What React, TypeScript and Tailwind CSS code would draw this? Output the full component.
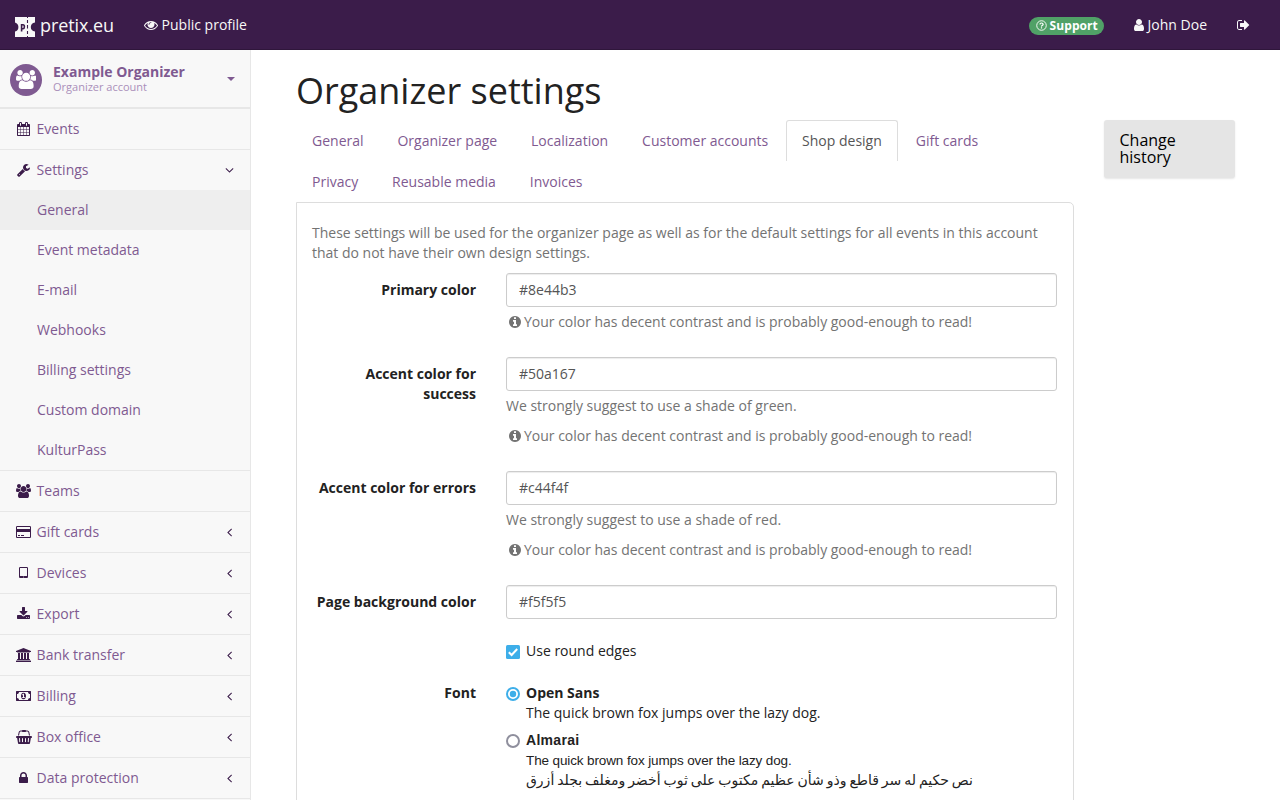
import React from "react";

type Glyph = { x?: number; w: number; d: string };

const G: Record<string, Glyph> = {
  eye: { w: 1792, d: "M1664 960q-152-236-381-353 61 104 61 225 0 185-131.5 316.5t-316.5 131.5-316.5-131.5-131.5-316.5q0-121 61-225-229 117-381 353 133 205 333.5 326.5t434.5 121.5 434.5-121.5 333.5-326.5zm-720-384q0-20-14-34t-34-14q-125 0-214.5 89.5t-89.5 214.5q0 20 14 34t34 14 34-14 14-34q0-86 61-147t147-61q20 0 34-14t14-34zm848 384q0 34-20 69-140 230-376.5 368.5t-499.5 138.5-499.5-139-376.5-368q-20-35-20-69t20-69q140-229 376.5-368t499.5-139 499.5 139 376.5 368q20 35 20 69z" },
  users: { x: 64, w: 1920, d: "M657 896q-162 5-265 128h-134q-82 0-138-40.5t-56-118.5q0-353 124-353 6 0 43.5 21t97.5 42.5 119 21.5q67 0 133-23-5 37-5 66 0 139 81 256zm1071 637q0 120-73 189.5t-194 69.5h-874q-121 0-194-69.5t-73-189.5q0-53 3.5-103.5t14-109 26.5-108.5 43-97.5 62-81 85.5-53.5 111.5-20q10 0 43 21.5t73 48 107 48 135 21.5 135-21.5 107-48 73-48 43-21.5q61 0 111.5 20t85.5 53.5 62 81 43 97.5 26.5 108.5 14 109 3.5 103.5zm-1024-1277q0 106-75 181t-181 75-181-75-75-181 75-181 181-75 181 75 75 181zm704 384q0 159-112.5 271.5t-271.5 112.5-271.5-112.5-112.5-271.5 112.5-271.5 271.5-112.5 271.5 112.5 112.5 271.5zm576 225q0 78-56 118.5t-138 40.5h-134q-103-123-265-128 81-117 81-256 0-29-5-66 66 23 133 23 59 0 119-21.5t97.5-42.5 43.5-21q124 0 124 353zm-128-609q0 106-75 181t-181 75-181-75-75-181 75-181 181-75 181 75 75 181z" },
  calendar: { x: 64, w: 1664, d: "M192 1664h288v-288h-288v288zm352 0h320v-288h-320v288zm-352-352h288v-320h-288v320zm352 0h320v-320h-320v320zm-352-384h288v-288h-288v288zm736 736h320v-288h-320v288zm-384-736h320v-288h-320v288zm768 736h288v-288h-288v288zm-384-352h320v-320h-320v320zm-352-864v-288q0-13-9.5-22.5t-22.5-9.5h-64q-13 0-22.5 9.5t-9.5 22.5v288q0 13 9.5 22.5t22.5 9.5h64q13 0 22.5-9.5t9.5-22.5zm736 864h288v-320h-288v320zm-384-384h320v-288h-320v288zm384 0h288v-288h-288v288zm32-480v-288q0-13-9.5-22.5t-22.5-9.5h-64q-13 0-22.5 9.5t-9.5 22.5v288q0 13 9.5 22.5t22.5 9.5h64q13 0 22.5-9.5t9.5-22.5zm384-64v1280q0 52-38 90t-90 38h-1408q-52 0-90-38t-38-90v-1280q0-52 38-90t90-38h128v-96q0-66 47-113t113-47h64q66 0 113 47t47 113v96h384v-96q0-66 47-113t113-47h64q66 0 113 47t47 113v96h128q52 0 90 38t38 90z" },
  wrench: { x: 64, w: 1664, d: "M448 1472q0-26-19-45t-45-19-45 19-19 45 19 45 45 19 45-19 19-45zm644-420l-682 682q-37 37-90 37-52 0-91-37l-106-108q-38-36-38-90 0-53 38-91l681-681q39 98 114.5 173.5t173.5 114.5zm634-435q0 39-23 106-47 134-164.5 217.5t-258.5 83.5q-185 0-316.5-131.5t-131.5-316.5 131.5-316.5 316.5-131.5q58 0 121.5 16.5t107.5 46.5q16 11 16 28t-16 28l-293 169v224l193 107q5-3 79-48.5t135.5-81 70.5-35.5q15 0 23.5 10t8.5 25z" },
  down: { x: 320, w: 1152, d: "M1395 736q0 13-10 23l-466 466q-10 10-23 10t-23-10l-466-466q-10-10-10-23t10-23l50-50q10-10 23-10t23 10l393 393 393-393q10-10 23-10t23 10l50 50q10 10 10 23z" },
  left: { x: 576, w: 640, d: "M1203 544q0 13-10 23l-393 393 393 393q10 10 10 23t-10 23l-50 50q-10 10-23 10t-23-10l-466-466q-10-10-10-23t10-23l466-466q10-10 23-10t23 10l50 50q10 10 10 23z" },
  card: { w: 1920, d: "M1760 128q66 0 113 47t47 113v1216q0 66-47 113t-113 47h-1600q-66 0-113-47t-47-113v-1216q0-66 47-113t113-47h1600zm-1600 128q-13 0-22.5 9.5t-9.5 22.5v224h1664v-224q0-13-9.5-22.5t-22.5-9.5h-1600zm1600 1280q13 0 22.5-9.5t9.5-22.5v-608h-1664v608q0 13 9.5 22.5t22.5 9.5h1600zm-1504-128v-128h256v128h-256zm384 0v-128h384v128h-384z" },
  tablet: { x: 320, w: 1152, d: "M960 1408q0-26-19-45t-45-19-45 19-19 45 19 45 45 19 45-19 19-45zm384-160v-960q0-13-9.5-22.5t-22.5-9.5h-832q-13 0-22.5 9.5t-9.5 22.5v960q0 13 9.5 22.5t22.5 9.5h832q13 0 22.5-9.5t9.5-22.5zm128-960v1088q0 66-47 113t-113 47h-832q-66 0-113-47t-47-113v-1088q0-66 47-113t113-47h832q66 0 113 47t47 113z" },
  download: { x: 64, w: 1664, d: "M1344 1344q0-26-19-45t-45-19-45 19-19 45 19 45 45 19 45-19 19-45zm256 0q0-26-19-45t-45-19-45 19-19 45 19 45 45 19 45-19 19-45zm128-224v320q0 40-28 68t-68 28h-1472q-40 0-68-28t-28-68v-320q0-40 28-68t68-28h465l135 136q58 56 136 56t136-56l136-136h464q40 0 68 28t28 68zm-325-569q17 41-14 70l-448 448q-18 19-45 19t-45-19l-448-448q-31-29-14-70 17-39 59-39h256v-448q0-26 19-45t45-19h256q26 0 45 19t19 45v448h256q42 0 59 39z" },
  bank: { w: 1920, d: "M960 0l960 384v128h-128q0 26-20.5 45t-48.5 19h-1526q-28 0-48.5-19t-20.5-45h-128v-128zm-704 640h256v768h128v-768h256v768h128v-768h256v768h128v-768h256v768h59q28 0 48.5 19t20.5 45v64h-1664v-64q0-26 20.5-45t48.5-19h59v-768zm1595 960q28 0 48.5 19t20.5 45v128h-1920v-128q0-26 20.5-45t48.5-19h1782z" },
  money: { w: 1920, d: "M768 1152h384v-96h-128v-448h-114l-148 137 77 80q42-37 55-57h2v288h-128v96zm512-256q0 70-21 142t-59.5 134-101.5 101-138 39-138-39-101.5-101-59.5-134-21-142 21-142 59.5-134 101.5-101 138-39 138 39 101.5 101 59.5 134 21 142zm512 256v-512q-106 0-181-75t-75-181h-1152q0 106-75 181t-181 75v512q106 0 181 75t75 181h1152q0-106 75-181t181-75zm128-832v1152q0 26-19 45t-45 19h-1792q-26 0-45-19t-19-45v-1152q0-26 19-45t45-19h1792q26 0 45 19t19 45z" },
  basket: { w: 2048, d: "M1920 768q53 0 90.5 37.5t37.5 90.5-37.5 90.5-90.5 37.5h-15l-115 662q-8 46-44 76t-82 30h-1280q-46 0-82-30t-44-76l-115-662h-15q-53 0-90.5-37.5t-37.5-90.5 37.5-90.5 90.5-37.5h1792zm-1435 800q26-2 43.5-22.5t15.5-46.5l-32-416q-2-26-22.5-43.5t-46.5-15.5-43.5 22.5-15.5 46.5l32 416q2 25 20.5 42t43.5 17h5zm411-64v-416q0-26-19-45t-45-19-45 19-19 45v416q0 26 19 45t45 19 45-19 19-45zm384 0v-416q0-26-19-45t-45-19-45 19-19 45v416q0 26 19 45t45 19 45-19 19-45zm352 5l32-416q2-26-15.5-46.5t-43.5-22.5-46.5 15.5-22.5 43.5l-32 416q-2 26 15.5 46.5t43.5 22.5h5q25 0 43.5-17t20.5-42zm-1156-1217l-93 412h-132l101-441q19-88 89-143.5t160-55.5h167q0-26 19-45t45-19h384q26 0 45 19t19 45h167q90 0 160 55.5t89 143.5l101 441h-132l-93-412q-11-44-45.5-72t-79.5-28h-167q0 26-19 45t-45 19h-384q-26 0-45-19t-19-45h-167q-45 0-79.5 28t-45.5 72z" },
  lock: { x: 320, w: 1152, d: "M640 768h512v-192q0-106-75-181t-181-75-181 75-75 181v192zm832 96v576q0 40-28 68t-68 28h-960q-40 0-68-28t-28-68v-576q0-40 28-68t68-28h32v-192q0-184 132-316t316-132 316 132 132 316v192h32q40 0 68 28t28 68z" },
  info: { x: 128, w: 1536, d: "M1152 1376v-160q0-14-9-23t-23-9h-96v-512q0-14-9-23t-23-9h-320q-14 0-23 9t-9 23v160q0 14 9 23t23 9h96v320h-96q-14 0-23 9t-9 23v160q0 14 9 23t23 9h448q14 0 23-9t9-23zm-128-896v-160q0-14-9-23t-23-9h-192q-14 0-23 9t-9 23v160q0 14 9 23t23 9h192q14 0 23-9t9-23zm640 416q0 209-103 385.5t-279.5 279.5-385.5 103-385.5-103-279.5-279.5-103-385.5 103-385.5 279.5-279.5 385.5-103 385.5 103 279.5 279.5 103 385.5z" },
  user: { x: 256, w: 1280, d: "M1536 1399q0 109-62.5 187t-150.5 78h-854q-88 0-150.5-78t-62.5-187q0-85 8.5-160.5t31.5-152 58.5-131 94-89 134.5-34.5q131 128 313 128t313-128q76 0 134.5 34.5t94 89 58.5 131 31.5 152 8.5 160.5zm-256-887q0 159-112.5 271.5t-271.5 112.5-271.5-112.5-112.5-271.5 112.5-271.5 271.5-112.5 271.5 112.5 112.5 271.5z" },
  signout: { x: 64, w: 1600, d: "M704 1440q0 4 1 20t.5 26.5-3 23.5-10 19.5-20.5 6.5h-320q-119 0-203.5-84.5t-84.5-203.5v-704q0-119 84.5-203.5t203.5-84.5h320q13 0 22.5 9.5t9.5 22.5q0 4 1 20t.5 26.5-3 23.5-10 19.5-20.5 6.5h-320q-66 0-113 47t-47 113v704q0 66 47 113t113 47h312l11.5 1 11.5 3 8 5.5 7 9 2 13.5zm928-544q0 26-19 45l-544 544q-19 19-45 19t-45-19-19-45v-288h-448q-26 0-45-19t-19-45v-384q0-26 19-45t45-19h448v-288q0-26 19-45t45-19 45 19l544 544q19 19 19 45z" },
};

function Icon({ name, size = 14, className = "" }: { name: string; size?: number; className?: string }) {
  const g = G[name];
  return (
    <svg viewBox={`${g.x ?? 0} 0 ${g.w} 1792`} width={(g.w / 1792) * size} height={size} fill="currentColor" className={`shrink-0 ${className}`}>
      <path d={g.d} />
    </svg>
  );
}

function Row({ icon, label, chevron }: { icon: string; label: string; chevron?: string }) {
  return (
    <a className="flex h-[41px] items-center border-b border-[#e7e7e7] pl-[14.5px] pr-[18px]">
      <span className="flex w-[18px] justify-center text-[#3b1c4a]"><Icon name={icon} /></span>
      <span className="ml-[4.1px] flex-1">{label}</span>
      {chevron && <Icon name={chevron} className="text-[#3b1c4a]" />}
    </a>
  );
}

const SUB = ["General", "Event metadata", "E-mail", "Webhooks", "Billing settings", "Custom domain", "KulturPass"];
const REST = [
  ["users", "Teams", ""],
  ["card", "Gift cards", "left"],
  ["tablet", "Devices", "left"],
  ["download", "Export", "left"],
  ["bank", "Bank transfer", "left"],
  ["money", "Billing", "left"],
  ["basket", "Box office", "left"],
  ["lock", "Data protection", "left"],
];

const TABS = ["General", "Organizer page", "Localization", "Customer accounts", "Shop design", "Gift cards", "Privacy", "Reusable media", "Invoices"];

function ColorField({ label, value, help, contrast = true }: { label: string; value: string; help?: string; contrast?: boolean }) {
  return (
    <div className="mb-[15px] flex">
      <div className="w-[164px] shrink-0 pt-[7px] text-right font-bold">{label}</div>
      <div className="ml-[30px] flex-1">
        <div className="h-[34px] rounded-[3px] border border-[#ccc] px-3 py-[6px] text-[#555] shadow-[inset_0_1px_1px_rgba(0,0,0,0.075)]">{value}</div>
        <div className="text-[#737373]">
          {help && <div className="mt-[5px] mb-[10px]">{help}</div>}
          {contrast && (
            <div className="mt-[5px] mb-[10px] flex items-center">
              <span className="flex w-[18px] justify-center"><Icon name="info" /></span>
              <span className="tracking-[-0.01px]">Your color has decent contrast and is probably good-enough to read!</span>
            </div>
          )}
        </div>
      </div>
    </div>
  );
}

export default function App() {
  return (
    <div className="h-[800px] w-[1280px] overflow-hidden bg-white font-['Open_Sans',sans-serif] text-[14px] leading-[20px] text-[#222]">
      <header className="flex h-[50px] items-center border-b border-[#2f163b] bg-[#3b1c4a] text-[#f8f8f8]">
        <svg viewBox="0 0 20 20" className="ml-[15px] mt-[4px] size-5 shrink-0">
          <path fill="#f8f8f8" d="M0 0H12V1H13V0H20V5.4Q15.8 6.2 15.8 10T20 14.6V20H13V19H12V20H0V14.6Q3.4 13.6 3.4 10T0 5.4Z" />
          <path stroke="#3b1c4a" strokeWidth="1.1" d="M12.5 3V6M12.5 8V11.5M12.5 14V17" />
          <path fill="none" stroke="#3b1c4a" strokeWidth="1.6" d="M6.6 7V14.6M6.6 7.8H8Q9.4 7.8 9.4 9.7T8 11.7H6.6" />
        </svg>
        <span className="ml-[5px] text-[18px] tracking-[-0.08px]">pretix.eu</span>
        <a className="ml-[30px] flex items-center"><Icon name="eye" /><span className="ml-[3.6px]">Public profile</span></a>
        <a className="ml-auto mt-[2px] flex h-[18px] w-[75px] items-center justify-center rounded-full bg-[#50a167] text-[12px] font-bold text-white">
          <svg viewBox="0 0 12 12" className="mr-[2.5px] size-[11px]" fill="none" stroke="currentColor">
            <circle cx="6" cy="6" r="5.2" strokeWidth="1" />
            <path strokeWidth="1.3" d="M4.2 4.8Q4.4 3.3 6 3.3T7.8 4.7Q7.8 5.4 6.8 6T6 7.2M6 8V9.3" />
          </svg>
          <span className="pt-px tracking-[0.08px]">Support</span>
        </a>
        <a className="ml-[29.5px] flex items-center"><Icon name="user" /><span className="ml-[3.6px]">John Doe</span></a>
        <a className="ml-[30px] mr-[30.5px]"><Icon name="signout" /></a>
      </header>

      <div className="flex h-[750px]">
        <nav className="w-[251px] shrink-0 overflow-hidden border-r border-[#e7e7e7] bg-[#f8f8f8] text-[#7f5a91]">
          <div className="flex h-[59px] items-center border-b-2 border-[#e7e7e7] pl-[10px] pr-[15px] pt-[2px]">
            <span className="flex size-8 items-center justify-center rounded-full bg-[#7f5a91] text-white"><Icon name="users" size={19} /></span>
            <div className="ml-[11px] -mt-[4px] flex-1">
              <div className="h-[17px] font-bold leading-[18px]">Example Organizer</div>
              <div className="text-[11px] leading-[13px] text-[#aa8fba]">Organizer account</div>
            </div>
            <svg viewBox="0 0 8 4" className="-mt-[2px] h-1 w-2 fill-current"><path d="M0 0H8L4 4Z" /></svg>
          </div>
          <Row icon="calendar" label="Events" />
          <div className="border-b border-[#e7e7e7]">
            <a className="flex h-[40px] items-center pl-[14.5px] pr-[16px]">
              <span className="flex w-[18px] justify-center text-[#3b1c4a]"><Icon name="wrench" /></span>
              <span className="ml-[4.1px] flex-1">Settings</span>
              <Icon name="down" className="text-[#3b1c4a]" />
            </a>
            {SUB.map((s, i) => (
              <a key={s} className={`block h-[40px] py-[10px] pl-[37px] ${i === 0 ? "bg-[#eee]" : ""}`}>{s}</a>
            ))}
          </div>
          {REST.map(([i, l, c]) => <Row key={l} icon={i} label={l} chevron={c} />)}
        </nav>

        <main className="flex-1 pl-[45px] pr-[45px]">
          <h1 className="mt-[21px] mb-[9px] text-[36px] font-normal leading-[40px]">Organizer settings</h1>
          <div className="flex items-start">
            <div className="w-[778px]">
              <div className="flex flex-wrap">
                {TABS.map((t) => (
                  <a key={t} className={`mr-[1.9px] h-[41px] rounded-t-[3px] border border-b-0 px-[15px] py-[10px] ${t === "Shop design" ? "border-[#ddd] bg-white text-[#555]" : "border-transparent text-[#7f5a91]"}`}>{t}</a>
                ))}
              </div>
              <section className="h-[640px] rounded-tr-[5px] border border-[#ddd] pl-[15px] pr-[16px] pt-[20px]">
                <p className="mb-[10px] text-[#737373]">These settings will be used for the organizer page as well as for the default settings for all events in this account that do not have their own design settings.</p>
                <ColorField label="Primary color" value="#8e44b3" />
                <ColorField label="Accent color for success" value="#50a167" help="We strongly suggest to use a shade of green." />
                <ColorField label="Accent color for errors" value="#c44f4f" help="We strongly suggest to use a shade of red." />
                <ColorField label="Page background color" value="#f5f5f5" contrast={false} />
                <div className="ml-[194px] mt-[22px] flex items-center">
                  <svg viewBox="0 0 14 14" className="mt-[2px] size-[14px]"><rect width="14" height="14" rx="1.5" fill="#3daee9" /><path d="M2.8 7.2L5.6 10L11.2 4" fill="none" stroke="#fff" strokeWidth="2" /></svg>
                  <span className="ml-[6px]">Use round edges</span>
                </div>
                <div className="mt-[22px] flex">
                  <div className="w-[164px] text-right font-bold">Font</div>
                  <div className="ml-[30px]">
                    <div className="flex">
                      <svg viewBox="0 0 14 14" className="mt-[4px] size-[14px]"><circle cx="7" cy="7" r="6" fill="#fff" stroke="#3daee9" strokeWidth="2" /><circle cx="7" cy="7" r="3.2" fill="#3daee9" /></svg>
                      <div className="ml-[6px]"><div className="font-bold">Open Sans</div><div>The quick brown fox jumps over the lazy dog.</div></div>
                    </div>
                    <div className="mt-[7px] flex">
                      <svg viewBox="0 0 14 14" className="mt-[4px] size-[14px]"><circle cx="7" cy="7" r="6" fill="#fff" stroke="#8f8f9d" strokeWidth="2" /></svg>
                      <div className="ml-[6px] whitespace-nowrap font-['Liberation_Sans','DejaVu_Sans',sans-serif]">
                        <div className="font-bold tracking-[0.3px]">Almarai</div>
                        <div className="h-5 pt-px text-[13.5px] tracking-[-0.12px]">The quick brown fox jumps over the lazy dog.</div>
                        <div dir="rtl" className="w-fit text-[14px] [word-spacing:-0.95px]">نص حكيم له سر قاطع وذو شأن عظيم مكتوب على ثوب أخضر ومغلف بجلد أزرق</div>
                      </div>
                    </div>
                  </div>
                </div>
              </section>
            </div>
            <aside className="ml-[30px] w-[131px] rounded-[3px] bg-[#e5e5e5] px-[15.5px] pb-[12px] pt-[12px] text-[16px] leading-[17px] text-black shadow-[0_1px_2px_rgba(0,0,0,0.1)]">Change history</aside>
          </div>
        </main>
      </div>
    </div>
  );
}
